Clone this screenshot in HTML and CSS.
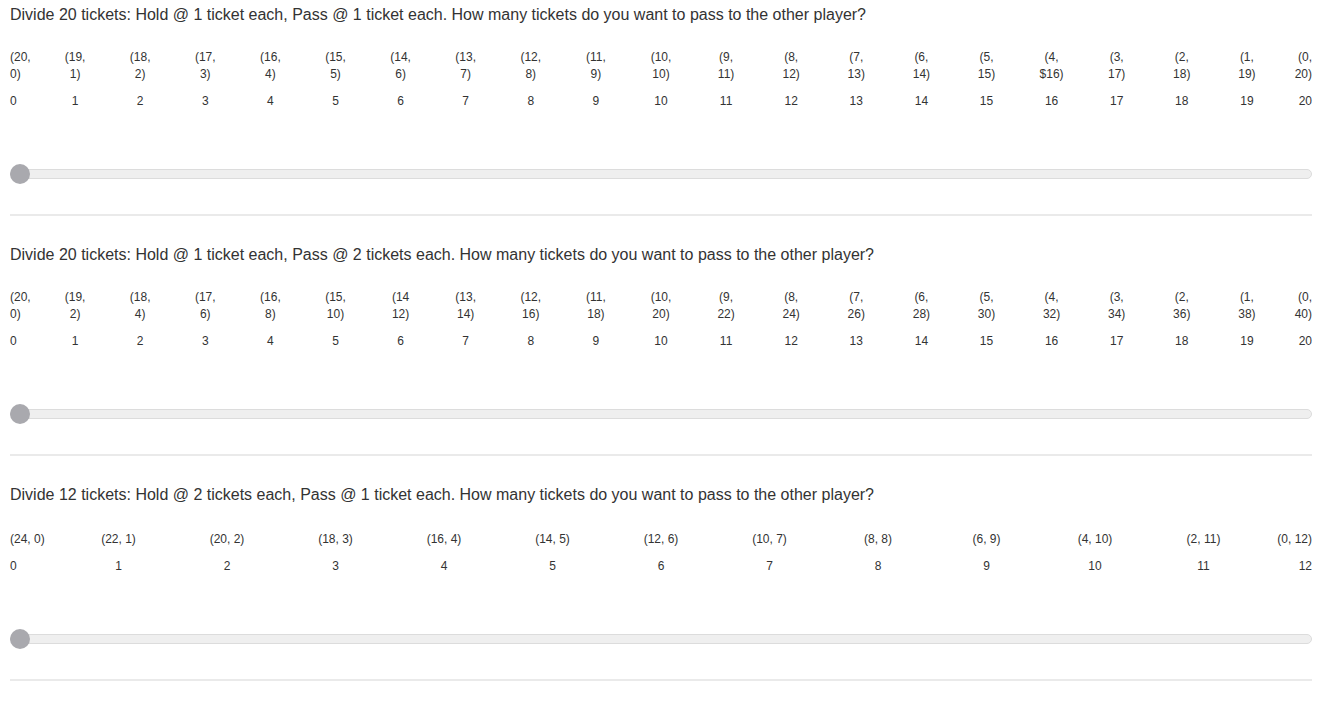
FILE: index.html
```html
<!DOCTYPE html>
<html>
<head>
<meta charset="utf-8">
<link rel="stylesheet" href="styles.css">
</head>
<body>
<div class="page">

<section class="q">
  <p class="title">Divide 20 tickets: Hold @ 1 ticket each, Pass @ 1 ticket each. How many tickets do you want to pass to the other player?</p>
  <div class="labels wrap n20">
    <span class="c"><span>(20, 0)</span></span>
    <span class="c"><span>(19, 1)</span></span>
    <span class="c"><span>(18, 2)</span></span>
    <span class="c"><span>(17, 3)</span></span>
    <span class="c"><span>(16, 4)</span></span>
    <span class="c"><span>(15, 5)</span></span>
    <span class="c"><span>(14, 6)</span></span>
    <span class="c"><span>(13, 7)</span></span>
    <span class="c"><span>(12, 8)</span></span>
    <span class="c"><span>(11, 9)</span></span>
    <span class="c"><span>(10, 10)</span></span>
    <span class="c"><span>(9, 11)</span></span>
    <span class="c"><span>(8, 12)</span></span>
    <span class="c"><span>(7, 13)</span></span>
    <span class="c"><span>(6, 14)</span></span>
    <span class="c"><span>(5, 15)</span></span>
    <span class="c"><span>(4, $16)</span></span>
    <span class="c"><span>(3, 17)</span></span>
    <span class="c"><span>(2, 18)</span></span>
    <span class="c"><span>(1, 19)</span></span>
    <span class="c"><span>(0, 20)</span></span>
  </div>
  <div class="labels nums n20">
    <span class="c">0</span><span class="c">1</span><span class="c">2</span><span class="c">3</span><span class="c">4</span><span class="c">5</span><span class="c">6</span><span class="c">7</span><span class="c">8</span><span class="c">9</span><span class="c">10</span><span class="c">11</span><span class="c">12</span><span class="c">13</span><span class="c">14</span><span class="c">15</span><span class="c">16</span><span class="c">17</span><span class="c">18</span><span class="c">19</span><span class="c">20</span>
  </div>
  <div class="slider"><div class="track"></div><div class="thumb"></div></div>
  <hr class="rule">
</section>

<section class="q">
  <p class="title">Divide 20 tickets: Hold @ 1 ticket each, Pass @ 2 tickets each. How many tickets do you want to pass to the other player?</p>
  <div class="labels wrap n20">
    <span class="c"><span>(20, 0)</span></span>
    <span class="c"><span>(19, 2)</span></span>
    <span class="c"><span>(18, 4)</span></span>
    <span class="c"><span>(17, 6)</span></span>
    <span class="c"><span>(16, 8)</span></span>
    <span class="c"><span>(15, 10)</span></span>
    <span class="c"><span>(14 12)</span></span>
    <span class="c"><span>(13, 14)</span></span>
    <span class="c"><span>(12, 16)</span></span>
    <span class="c"><span>(11, 18)</span></span>
    <span class="c"><span>(10, 20)</span></span>
    <span class="c"><span>(9, 22)</span></span>
    <span class="c"><span>(8, 24)</span></span>
    <span class="c"><span>(7, 26)</span></span>
    <span class="c"><span>(6, 28)</span></span>
    <span class="c"><span>(5, 30)</span></span>
    <span class="c"><span>(4, 32)</span></span>
    <span class="c"><span>(3, 34)</span></span>
    <span class="c"><span>(2, 36)</span></span>
    <span class="c"><span>(1, 38)</span></span>
    <span class="c"><span>(0, 40)</span></span>
  </div>
  <div class="labels nums n20">
    <span class="c">0</span><span class="c">1</span><span class="c">2</span><span class="c">3</span><span class="c">4</span><span class="c">5</span><span class="c">6</span><span class="c">7</span><span class="c">8</span><span class="c">9</span><span class="c">10</span><span class="c">11</span><span class="c">12</span><span class="c">13</span><span class="c">14</span><span class="c">15</span><span class="c">16</span><span class="c">17</span><span class="c">18</span><span class="c">19</span><span class="c">20</span>
  </div>
  <div class="slider"><div class="track"></div><div class="thumb"></div></div>
  <hr class="rule">
</section>

<section class="q">
  <p class="title">Divide 12 tickets: Hold @ 2 tickets each, Pass @ 1 ticket each. How many tickets do you want to pass to the other player?</p>
  <div class="labels single n12">
    <span class="c">(24, 0)</span>
    <span class="c">(22, 1)</span>
    <span class="c">(20, 2)</span>
    <span class="c">(18, 3)</span>
    <span class="c">(16, 4)</span>
    <span class="c">(14, 5)</span>
    <span class="c">(12, 6)</span>
    <span class="c">(10, 7)</span>
    <span class="c">(8, 8)</span>
    <span class="c">(6, 9)</span>
    <span class="c">(4, 10)</span>
    <span class="c">(2, 11)</span>
    <span class="c">(0, 12)</span>
  </div>
  <div class="labels nums n12">
    <span class="c">0</span><span class="c">1</span><span class="c">2</span><span class="c">3</span><span class="c">4</span><span class="c">5</span><span class="c">6</span><span class="c">7</span><span class="c">8</span><span class="c">9</span><span class="c">10</span><span class="c">11</span><span class="c">12</span>
  </div>
  <div class="slider"><div class="track"></div><div class="thumb"></div></div>
  <hr class="rule">
</section>

</div>
</body>
</html>
```

FILE: styles.css
```css
html, body {
  margin: 0;
  padding: 0;
  background: #fff;
}

body {
  font-family: "Liberation Sans", Arial, Helvetica, sans-serif;
  color: #333;
  overflow: hidden;
}

.page {
  width: 1302px;
  padding-left: 10px;
}

.q {
  height: 240px;
  padding-top: 5px;
  box-sizing: border-box;
}

.title {
  margin: 0;
  font-size: 16px;
  line-height: 20px;
}

.labels {
  display: grid;
  font-size: 12px;
  line-height: 17px;
}

.labels.n20 {
  grid-template-columns: 1fr repeat(19, 2fr) 1fr;
}

.labels.n12 {
  grid-template-columns: 1fr repeat(11, 2fr) 1fr;
}

.labels .c {
  text-align: center;
  white-space: nowrap;
}

.labels .c:first-child {
  text-align: left;
}

.labels .c:last-child {
  text-align: right;
}

.labels.wrap {
  margin-top: 24px;
}

.labels.wrap .c > span {
  display: inline-block;
  width: min-content;
  white-space: normal;
}

.labels.single {
  margin-top: 26px;
}

.labels.nums {
  margin-top: 10px;
}

.slider {
  position: relative;
  height: 20px;
  margin-top: 54px;
}

.track {
  position: absolute;
  left: 0;
  right: 0;
  top: 5px;
  height: 8px;
  background: #efefef;
  border: 1px solid #dcdcdc;
  border-radius: 5px;
}

.thumb {
  position: absolute;
  left: 0;
  top: 0;
  width: 20px;
  height: 20px;
  border-radius: 50%;
  background: #a9a9ae;
}

.rule {
  margin: 30px 0 0 0;
  border: 0;
  border-top: 2px solid #eaeaea;
  height: 0;
}
```
